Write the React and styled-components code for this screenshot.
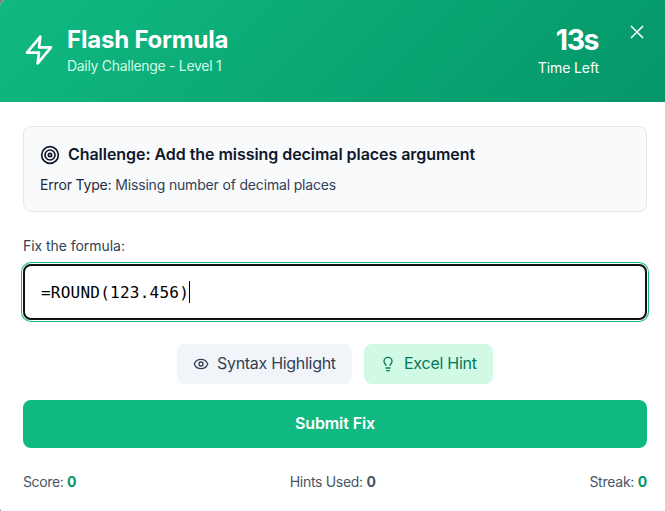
import React, { useState } from 'react';
import styled, { createGlobalStyle } from 'styled-components';
import { Target, Eye, Lightbulb, X } from 'lucide-react';

const GlobalStyle = createGlobalStyle`
  * {
    box-sizing: border-box;
  }

  body {
    margin: 0;
    overflow: hidden;
    background-color: #7f7f7f;
    font-family: Inter, 'Open Sans', sans-serif;
  }

  button {
    font-family: inherit;
    border: none;
    cursor: pointer;
  }
`;

const Modal = styled.div`
  width: 672px;
  margin: -2px 0 0 -1px;
  border-radius: 12px;
  overflow: hidden;
  background-color: #fff;
`;

const Header = styled.header`
  display: flex;
  align-items: center;
  justify-content: space-between;
  height: 104px;
  padding: 24px;
  color: #fff;
  background: linear-gradient(135deg, #10b981, #059669);
`;

const Brand = styled.div`
  display: flex;
  align-items: center;
  gap: 12px;
`;

const Label = styled.span`
  white-space: nowrap;
  letter-spacing: ${props => props.$track || 0}px;
`;

const Title = styled.h2`
  margin: 0;
  font-size: 24px;
  line-height: 32px;
  font-weight: 700;
`;

const Subtitle = styled.p`
  margin: 0;
  font-size: 14px;
  line-height: 20px;
  color: #d1fae5;
`;

const HeaderRight = styled.div`
  display: flex;
  align-items: flex-start;
  gap: 27px;
`;

const Timer = styled.div`
  text-align: right;
`;

const Seconds = styled.div`
  padding-right: 1px;
  font-size: 28.5px;
  line-height: 36px;
  font-weight: 700;
`;

const TimerCaption = styled.div`
  font-size: 14px;
  line-height: 20px;
`;

const CloseButton = styled.button`
  display: flex;
  padding: 0;
  margin: -1px -1px 0 0;
  color: #fff;
  background: none;
`;

const Body = styled.main`
  padding: 24px;
`;

const ChallengeCard = styled.section`
  height: 86px;
  padding: 16px;
  border: 1px solid #e2e8f0;
  border-radius: 8px;
  background-color: #f8fafc;
`;

const ChallengeTitle = styled.h3`
  display: flex;
  align-items: center;
  gap: 8px;
  margin: 0 0 8px;
  font-size: 16px;
  line-height: 24px;
  height: 24px;
  font-weight: 600;
  color: #0f172a;

  span {
    padding-bottom: 2px;
  }
`;

const ErrorType = styled.p`
  margin: 0;
  font-size: 14px;
  line-height: 20px;
  color: #334155;

  b {
    font-weight: 400;
    color: #1e293b;
  }
`;

const FieldLabel = styled.label`
  display: block;
  margin: 24px 0 8px;
  font-size: 14px;
  line-height: 20px;
  font-weight: 400;
  color: #334155;
`;

const FormulaField = styled.div`
  display: flex;
  align-items: center;
  height: 56px;
  padding: 0 16px;
  border: 2px solid #101010;
  border-radius: 8px;
  box-shadow: 0 0 0 1px #fff, 0 0 0 2px #10b981;
  font-family: 'DejaVu Sans Mono', monospace;
  font-size: 16px;
  color: #000;
`;

const Caret = styled.span`
  width: 1px;
  height: 22px;
  background-color: #000;
`;

const Actions = styled.div`
  display: flex;
  justify-content: center;
  gap: 12px;
  margin: 24px 0 16px;
`;

const ActionButton = styled.button`
  display: flex;
  align-items: center;
  gap: 8px;
  width: ${props => props.$width}px;
  height: 40px;
  padding: 0 16px;
  border-radius: 8px;
  font-size: 16px;
  color: ${props => (props.$hint ? '#047857' : '#334155')};
  background-color: ${props => (props.$hint ? '#d1fae5' : '#f1f5f9')};

  span {
    padding-bottom: 2px;
  }
`;

const SubmitButton = styled.button`
  width: 100%;
  height: 48px;
  padding: 0 0 2px;
  border-radius: 8px;
  font-size: 16px;
  font-weight: 600;
  color: #fff;
  background-color: #10b981;
`;

const Stats = styled.footer`
  display: flex;
  justify-content: space-between;
  margin-top: 24px;
  font-size: 14px;
  line-height: 20px;
  color: #475569;
`;

const StatValue = styled.b`
  font-weight: 700;
  color: ${props => (props.$accent ? '#059669' : '#475569')};
`;

const BoltIcon = () => (
  <svg width="32" height="32" viewBox="0 0 24 24" fill="none" stroke="currentColor" strokeWidth="2" strokeLinecap="round" strokeLinejoin="round">
    <polygon points="13 2 3 14 12 14 11 22 21 10 12 10 13 2" />
  </svg>
);

function App() {
  const [formula] = useState('=ROUND(123.456)');

  return (
    <>
      <GlobalStyle />
      <Modal>
        <Header>
          <Brand>
            <BoltIcon />
            <div>
              <Title><Label $track={-0.2}>Flash Formula</Label></Title>
              <Subtitle><Label $track={-0.3}>Daily Challenge - Level 1</Label></Subtitle>
            </div>
          </Brand>
          <HeaderRight>
            <Timer>
              <Seconds><Label $track={-1.5}>13s</Label></Seconds>
              <TimerCaption><Label $track={-0.1}>Time Left</Label></TimerCaption>
            </Timer>
            <CloseButton aria-label="Close">
              <X size={22} strokeWidth={1.8} />
            </CloseButton>
          </HeaderRight>
        </Header>
        <Body>
          <ChallengeCard>
            <ChallengeTitle>
              <Target size={20} />
              <Label $track={-0.05}>Challenge: Add the missing decimal places argument</Label>
            </ChallengeTitle>
            <ErrorType>
              <Label $track={-0.17}><b>Error Type:</b> Missing number of decimal places</Label>
            </ErrorType>
          </ChallengeCard>
          <FieldLabel><Label $track={-0.05}>Fix the formula:</Label></FieldLabel>
          <FormulaField>
            <Label $track={0.24}>{formula}</Label>
            <Caret />
          </FormulaField>
          <Actions>
            <ActionButton $width={175}>
              <Eye size={16} />
              <Label $track={-0.3}>Syntax Highlight</Label>
            </ActionButton>
            <ActionButton $hint $width={129}>
              <Lightbulb size={16} />
              <Label $track={-0.25}>Excel Hint</Label>
            </ActionButton>
          </Actions>
          <SubmitButton><Label $track={-0.1}>Submit Fix</Label></SubmitButton>
          <Stats>
            <Label $track={-0.38}>Score: <StatValue $accent>0</StatValue></Label>
            <Label $track={-0.3}>Hints Used: <StatValue>0</StatValue></Label>
            <Label $track={-0.25}>Streak: <StatValue $accent>0</StatValue></Label>
          </Stats>
        </Body>
      </Modal>
    </>
  );
}

export default App;
